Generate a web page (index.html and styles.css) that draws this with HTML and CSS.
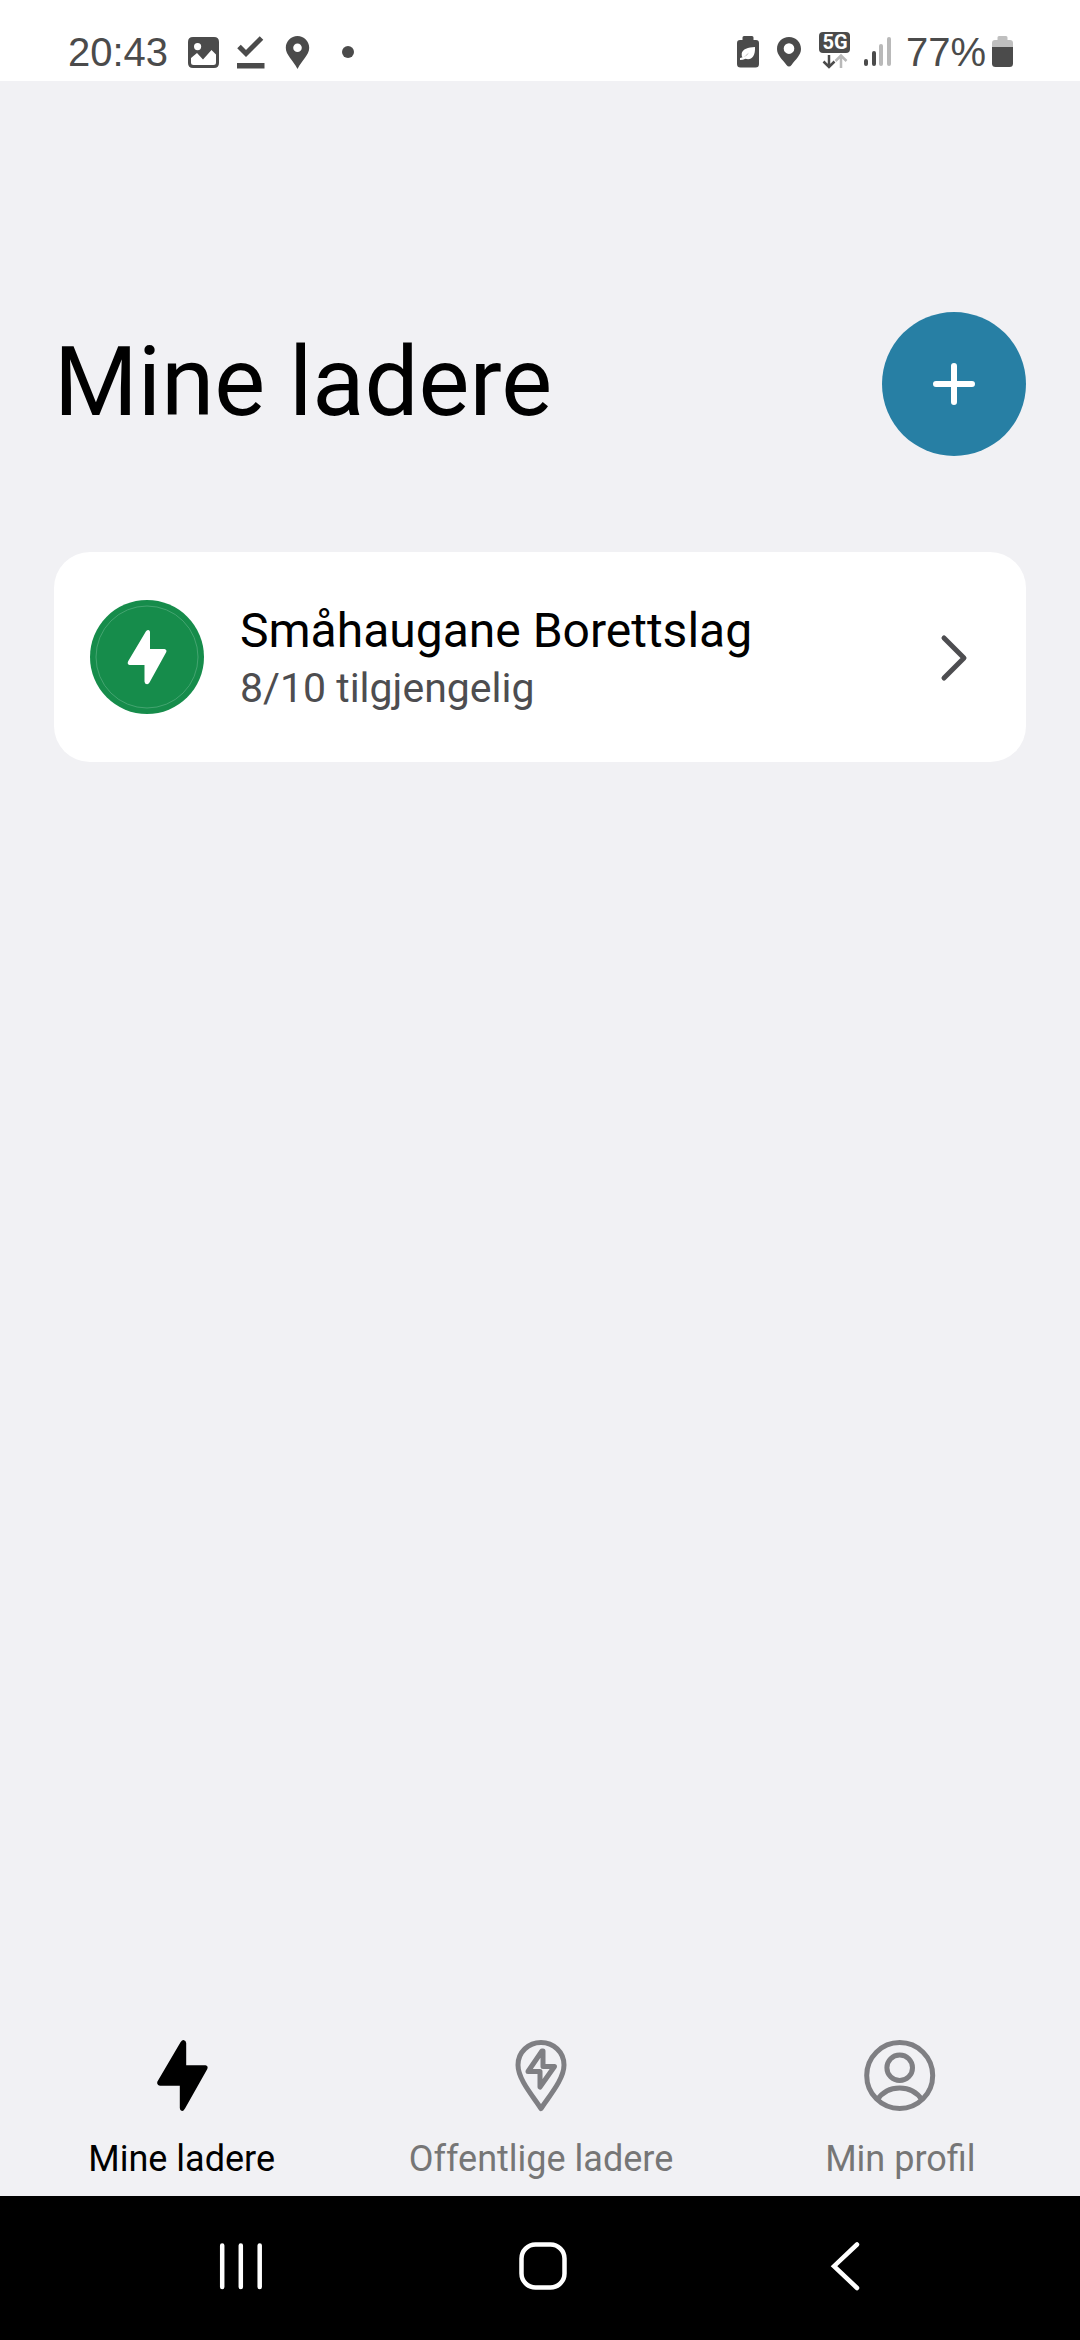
FILE: index.html
```html
<!DOCTYPE html>
<html lang="nb">
<head>
  <meta charset="utf-8">
  <meta name="viewport" content="width=device-width, initial-scale=1">
  <title>Mine ladere</title>
  <link rel="stylesheet" href="styles.css">
</head>
<body class="screen">
  <header class="status-bar">
    <div class="status-left">
      <time class="status-text">20:43</time>
      <div class="status-icons status-icons-left">
        <svg class="status-icon" viewBox="0 0 32 40" aria-hidden="true">
          <path fill="currentColor" fill-rule="evenodd" d="M5 5H26Q31 5 31 10V31Q31 36 26 36H5Q0 36 0 31V10Q0 5 5 5ZM9.600 11A3.600 3.600 0 1 0 9.600 18.200A3.600 3.600 0 1 0 9.600 11ZM3 26V30.500Q3 33 5.500 33H25.500Q28 33 28 30.500V22.500L23.500 18L15 27.500L9 21Z"/>
        </svg>
        <svg class="status-icon" viewBox="0 0 32 40" aria-hidden="true">
          <path fill="none" stroke="currentColor" stroke-width="5" d="M4 14.500L11 21.500L26.500 6"/>
          <path fill="currentColor" d="M2 31H29.500V36.500H2Z"/>
        </svg>
        <svg class="status-icon" viewBox="0 0 32 40" aria-hidden="true">
          <path fill="currentColor" fill-rule="evenodd" d="M15.500 4C9 4 3.800 9.200 3.800 15.700C3.800 23 11 28 15.500 37C20 28 27.200 23 27.200 15.700C27.200 9.200 22 4 15.500 4ZM15.500 11.500A4.300 4.300 0 1 1 15.500 20.100A4.300 4.300 0 1 1 15.500 11.500Z"/>
        </svg>
        <svg class="status-icon" viewBox="0 0 32 40" aria-hidden="true">
          <circle cx="19" cy="20" r="6" fill="currentColor"/>
        </svg>
      </div>
    </div>
    <div class="status-right">
      <div class="status-icons status-icons-right">
        <svg class="status-icon" viewBox="0 0 32 40" aria-hidden="true">
          <path fill="currentColor" d="M12 4H20Q21.500 4 21.500 5.500V8H24Q27 8 27 11V32Q27 35.500 23.500 35.500H8.500Q5 35.500 5 32V11Q5 8 8 8H10.500V5.500Q10.500 4 12 4Z"/>
          <path fill="#fff" d="M23 15C16 15.500 10.500 17 9.700 21.500Q9.400 23.500 10.500 25.500Q14 24 17 20.500Q14 25 8 26V28Q11 28 13.500 26.800C19 28.500 23.500 25 23 15Z"/>
        </svg>
        <svg class="status-icon" viewBox="0 0 32 40" aria-hidden="true">
          <path fill="currentColor" fill-rule="evenodd" d="M14 5C7 5 2 10 2 17C2 23 7 27 11.500 33Q14 36 16.500 33C21 27 26 23 26 17C26 10 21 5 14 5ZM14 11.300A5.300 5.300 0 1 1 14 21.900A5.300 5.300 0 1 1 14 11.300Z"/>
        </svg>
        <svg class="status-icon" viewBox="0 0 32 40" aria-hidden="true">
          <rect x="1" y="0" width="31" height="21" rx="4" fill="currentColor"/>
          <text class="network-label" x="17" y="17" text-anchor="middle">5G</text>
          <path fill="none" stroke="currentColor" stroke-width="2.500" d="M11 23V35M5.500 29.500L11 35L16.500 29.500"/>
          <path fill="none" stroke="#b9b9b9" stroke-width="2.500" d="M23 36V24M17.500 29L23 23.500L28.500 29"/>
        </svg>
        <svg class="status-icon" viewBox="0 0 32 40" aria-hidden="true">
          <g fill="currentColor"><rect x="3" y="27" width="4" height="7" rx="2"/><rect x="11" y="19" width="4" height="15" rx="2"/></g>
          <g fill="#b9b9b9"><rect x="18" y="12" width="4" height="22" rx="2"/><rect x="26" y="5" width="4" height="29" rx="2"/></g>
        </svg>
      </div>
      <span class="status-text">77%</span>
      <svg class="battery-icon" viewBox="0 0 24 40" aria-hidden="true">
        <path fill="#bfbfbf" d="M9 4H16Q17.500 4 17.500 5.500V8H20Q23 8 23 11V15H2V11Q2 8 5 8H7.500V5.500Q7.500 4 9 4Z"/>
        <path fill="currentColor" d="M2 15H23V31.500Q23 35 19.500 35H5.500Q2 35 2 31.500Z"/>
      </svg>
    </div>
  </header>

  <main class="content">
    <div class="page-head">
      <h1 class="page-title">Mine ladere</h1>
      <button class="add-button" type="button" aria-label="Legg til lader">
        <svg class="add-icon" viewBox="0 0 72 72" aria-hidden="true">
          <path fill="none" stroke="currentColor" stroke-width="6" stroke-linecap="round" d="M36 18V54M18 36H54"/>
        </svg>
      </button>
    </div>

    <a class="charger-card" href="#lader">
      <svg class="charger-badge" viewBox="0 0 114 114" aria-hidden="true">
        <circle cx="57" cy="57" r="57" fill="#168c4b"/>
        <circle cx="57" cy="57" r="51" fill="none" stroke="#58ae80" stroke-width="0.700"/>
        <path fill="#fff" d="M56 31.200Q57 30 58.500 30Q60 30.500 60 32V49H74.500Q77 49.500 76.300 52L59.500 82.500Q58.500 84.300 57 84.200Q54.500 84 54.500 81.500V65H39.500Q37 64.500 38 61.500Z"/>
      </svg>
      <span class="charger-text">
        <span class="charger-name">Småhaugane Borettslag</span>
        <span class="charger-status">8/10 tilgjengelig</span>
      </span>
      <svg class="chevron" viewBox="0 0 72 72" aria-hidden="true">
        <path fill="none" stroke="currentColor" stroke-width="5" stroke-linecap="round" stroke-linejoin="round" d="M26 17L46 37L26 57"/>
      </svg>
    </a>
  </main>

  <nav class="tab-bar" aria-label="Hovedmeny">
    <a class="tab tab-active" href="#mine" aria-current="page">
      <svg class="tab-icon" viewBox="1 0 72 72" aria-hidden="true">
        <path fill="currentColor" d="M35.500 2.300Q37 0 38.500 0Q41 0.300 41.200 3V25.300H60.500Q63.500 26 62.300 29L40 68.500Q38.300 71.300 37 71Q34.800 70.500 34.800 68V45.800H15Q11.500 45 12.300 41.800Z"/>
      </svg>
      <span class="tab-label">Mine ladere</span>
    </a>
    <a class="tab" href="#offentlige">
      <svg class="tab-icon" viewBox="1 0 72 72" aria-hidden="true">
        <g fill="none" stroke="currentColor" stroke-width="5" stroke-linejoin="round">
          <path d="M37 2.500C24.500 2.500 14 12 14 25C14 39 28 55 37 68.500C46 55 60 39 60 25C60 12 49.500 2.500 37 2.500Z"/>
          <path d="M39 11V26.500H50.500L36 47V31.500H24L38 11Z"/>
        </g>
      </svg>
      <span class="tab-label">Offentlige ladere</span>
    </a>
    <a class="tab" href="#profil">
      <svg class="tab-icon" viewBox="1 0 72 72" aria-hidden="true">
        <g fill="none" stroke="currentColor" stroke-width="5">
          <circle cx="36.700" cy="35.500" r="33"/>
          <circle cx="36.700" cy="27.700" r="12.800"/>
          <path d="M14.200 60Q22 48 36.700 48Q51 48 59.200 60"/>
        </g>
      </svg>
      <span class="tab-label">Min profil</span>
    </a>
  </nav>

  <footer class="system-bar">
    <button class="system-button" type="button" aria-label="Nylige apper">
      <svg class="system-icon" viewBox="0 0 60 60" aria-hidden="true">
        <path fill="none" stroke="currentColor" stroke-width="4.500" stroke-linecap="round" d="M11.200 9.500V51M29.800 9.500V51M48.700 9.500V51"/>
      </svg>
    </button>
    <button class="system-button" type="button" aria-label="Hjem">
      <svg class="system-icon" viewBox="0 0 60 60" aria-hidden="true">
        <rect x="8.500" y="8.500" width="43" height="43" rx="14" fill="none" stroke="currentColor" stroke-width="4.500"/>
      </svg>
    </button>
    <button class="system-button" type="button" aria-label="Tilbake">
      <svg class="system-icon" viewBox="0 0 60 60" aria-hidden="true">
        <path fill="none" stroke="currentColor" stroke-width="4.500" stroke-linecap="round" d="M42 8.500L19 30.200L42 52"/>
      </svg>
    </button>
  </footer>
</body>
</html>
```

FILE: styles.css
```css
* {
  box-sizing: border-box;
}

.screen {
  margin: 0;
  min-height: 100vh;
  display: flex;
  flex-direction: column;
  background: #f1f1f4;
  color: #000;
  font-family: Roboto, "Liberation Sans", sans-serif;
}

button {
  border: 0;
  padding: 0;
  background: none;
  font: inherit;
  cursor: pointer;
}

a {
  color: inherit;
  text-decoration: none;
}

/* Status bar */
.status-bar {
  display: flex;
  justify-content: space-between;
  align-items: center;
  padding: 23px 66px 0 68px;
  min-height: 81px;
  background: #fff;
  color: #4b4b4b;
}

.status-left,
.status-right,
.status-icons {
  display: flex;
  align-items: center;
}

.status-left {
  gap: 20px;
}

.status-right {
  gap: 4px;
}

.status-icons-left {
  gap: 15px;
}

.status-icons-right {
  gap: 11px;
  margin-right: 9px;
}

.status-text {
  font-family: "Liberation Sans", sans-serif;
  font-size: 40px;
  line-height: 48px;
}

.status-icon {
  display: block;
  width: 32px;
  height: 40px;
  overflow: visible;
}

.battery-icon {
  display: block;
  width: 24px;
  height: 40px;
}

.network-label {
  fill: #fff;
  font-size: 20px;
  font-weight: 700;
}

/* Page content */
.content {
  flex: 1;
  display: flex;
  flex-direction: column;
  gap: 96px;
  padding: 231px 54px 0;
}

.page-head {
  display: flex;
  justify-content: space-between;
  align-items: center;
}

.page-title {
  margin: 0;
  padding-bottom: 4px;
  font-size: 96px;
  line-height: 112px;
  font-weight: 400;
}

.add-button {
  display: flex;
  align-items: center;
  justify-content: center;
  width: 144px;
  height: 144px;
  border-radius: 50%;
  background: #277fa4;
  color: #fff;
}

.add-icon,
.chevron {
  width: 72px;
  height: 72px;
}

.charger-card {
  display: flex;
  align-items: center;
  gap: 36px;
  padding: 48px 36px;
  border-radius: 36px;
  background: #fff;
}

.charger-badge {
  width: 114px;
  height: 114px;
}

.charger-text {
  flex: 1;
  display: flex;
  flex-direction: column;
}

.charger-name {
  font-size: 48px;
  line-height: 62px;
}

.charger-status {
  font-size: 41px;
  line-height: 52px;
  color: #4d4d50;
}

.chevron {
  color: #4d4d50;
}

/* Bottom tabs */
.tab-bar {
  display: grid;
  grid-template-columns: repeat(3, 1fr);
  padding: 0 0 16px 2px;
}

.tab {
  display: flex;
  flex-direction: column;
  align-items: center;
  gap: 26px;
  color: #767676;
}

.tab-active {
  color: #000;
}

.tab-icon {
  width: 72px;
  height: 72px;
}

.tab:not(.tab-active) .tab-icon {
  color: #7f7f83;
}

.tab-label {
  font-size: 36px;
  line-height: 42px;
}

/* System navigation */
.system-bar {
  display: grid;
  grid-template-columns: repeat(3, 1fr);
  padding: 0 84px 4px 90px;
  min-height: 144px;
  background: #000;
}

.system-button {
  display: flex;
  align-items: center;
  justify-content: center;
  color: #fff;
}

.system-icon {
  width: 60px;
  height: 60px;
}
```
